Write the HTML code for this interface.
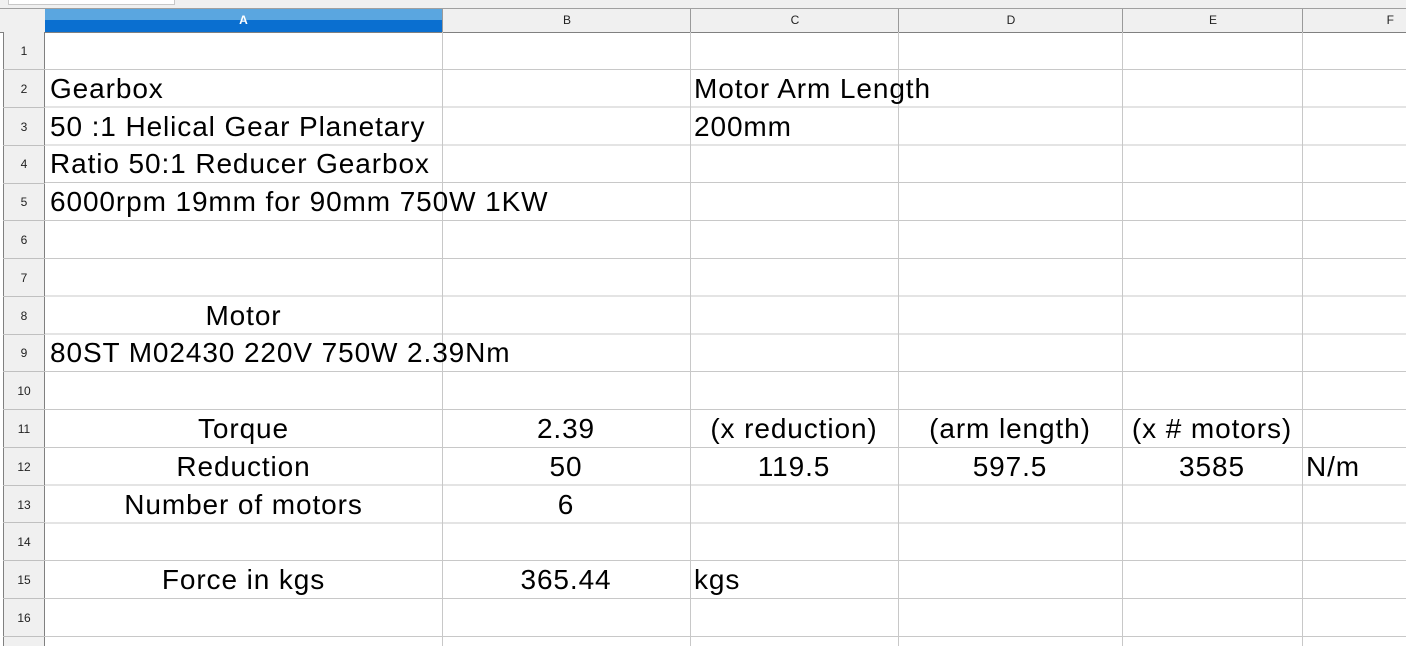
<!DOCTYPE html>
<html><head><style>
body{margin:0;width:1406px;height:646px;overflow:hidden;background:#fff;font-family:"Liberation Sans",Arial,sans-serif;position:relative}
.top{position:absolute;left:0;top:0;width:1406px;height:8px;background:#f0f0f0;border-bottom:1px solid #a0a0a0}
.top .t{position:absolute;left:8px;top:0;width:165px;height:4px;background:#fff;border:1px solid #c8c8c8;border-top:none}
.hdr{position:absolute;top:9px;height:23px;background:#f0f0f0;border-bottom:1px solid #808080;left:0;width:1406px}
.ch{position:absolute;top:9px;height:23px;line-height:22px;text-align:center;font-size:12px;color:#222;border-left:1px solid #9a9a9a}
.grid{position:absolute;left:45px;top:32px;width:1361px;height:614px;
background:repeating-linear-gradient(to bottom,transparent 0,transparent 36.8px,#c8c8c8 36.8px,#c8c8c8 37.8px)}
.v{position:absolute;top:32px;height:614px;width:1px;background:#c8c8c8}
.rh{position:absolute;left:3px;width:42px;height:614px;top:32px;background:#f0f0f0;border-left:1px solid #808080;border-right:1px solid #808080;box-sizing:border-box}
.rn{position:absolute;left:3px;width:42px;text-align:center;font-size:12px;color:#222;height:37.8px;line-height:38px}
.rl{position:absolute;left:3px;width:42px;height:1px;background:#c0c0c0}
.c{position:absolute;font-size:28px;letter-spacing:0.9px;color:#000;height:37.8px;line-height:38px;white-space:nowrap}
.ctr{text-align:center}
</style></head><body>
<div class="top"><div class="t"></div></div>
<div class="hdr"></div>
<div class="ch" style="left:0;width:45px;border-left:none;border-right:1px solid #9a9a9a"></div>
<div class="ch" style="left:45px;width:397px;background:linear-gradient(#5aa6e0 0 11px,#0a6fd0 11px);color:#fff;font-weight:bold;border-left:none">A</div>
<div class="ch" style="left:442px;width:248px">B</div>
<div class="ch" style="left:690px;width:208px">C</div>
<div class="ch" style="left:898px;width:224px">D</div>
<div class="ch" style="left:1122px;width:180px">E</div>
<div class="ch" style="left:1302px;width:104px;text-align:right;padding-right:12px;box-sizing:border-box">F</div>
<div class="grid"></div>
<div class="v" style="left:442px"></div><div class="v" style="left:690px"></div><div class="v" style="left:898px"></div><div class="v" style="left:1122px"></div><div class="v" style="left:1302px"></div>
<div class="rh"></div>
<div class="rn" style="top:32px">1</div><div class="rn" style="top:69.8px">2</div><div class="rn" style="top:107.6px">3</div><div class="rn" style="top:145.4px">4</div><div class="rn" style="top:183.2px">5</div><div class="rn" style="top:221px">6</div><div class="rn" style="top:258.8px">7</div><div class="rn" style="top:296.6px">8</div><div class="rn" style="top:334.4px">9</div><div class="rn" style="top:372.2px">10</div><div class="rn" style="top:410px">11</div><div class="rn" style="top:447.8px">12</div><div class="rn" style="top:485.6px">13</div><div class="rn" style="top:523.4px">14</div><div class="rn" style="top:561.2px">15</div><div class="rn" style="top:599px">16</div>
<div class="rl" style="top:69px"></div><div class="rl" style="top:107px"></div><div class="rl" style="top:145px"></div><div class="rl" style="top:183px"></div><div class="rl" style="top:220px"></div><div class="rl" style="top:258px"></div><div class="rl" style="top:296px"></div><div class="rl" style="top:334px"></div><div class="rl" style="top:371px"></div><div class="rl" style="top:409px"></div><div class="rl" style="top:447px"></div><div class="rl" style="top:485px"></div><div class="rl" style="top:522px"></div><div class="rl" style="top:560px"></div><div class="rl" style="top:598px"></div><div class="rl" style="top:636px"></div>

<div class="c" style="left:50px;top:69.8px">Gearbox</div>
<div class="c" style="left:694px;top:69.8px">Motor Arm Length</div>
<div class="c" style="left:50px;top:107.6px">50 :1 Helical Gear Planetary</div>
<div class="c" style="left:694px;top:107.6px">200mm</div>
<div class="c" style="left:50px;top:145.4px">Ratio 50:1 Reducer Gearbox</div>
<div class="c" style="left:50px;top:183.2px">6000rpm 19mm for 90mm 750W 1KW</div>
<div class="c ctr" style="left:45px;width:397px;top:296.6px">Motor</div>
<div class="c" style="left:50px;top:334.4px">80ST M02430 220V 750W 2.39Nm</div>
<div class="c ctr" style="left:45px;width:397px;top:410px">Torque</div>
<div class="c ctr" style="left:442px;width:248px;top:410px">2.39</div>
<div class="c ctr" style="left:690px;width:208px;top:410px">(x reduction)</div>
<div class="c ctr" style="left:898px;width:224px;top:410px">(arm length)</div>
<div class="c ctr" style="left:1122px;width:180px;top:410px">(x # motors)</div>
<div class="c ctr" style="left:45px;width:397px;top:447.8px">Reduction</div>
<div class="c ctr" style="left:442px;width:248px;top:447.8px">50</div>
<div class="c ctr" style="left:690px;width:208px;top:447.8px">119.5</div>
<div class="c ctr" style="left:898px;width:224px;top:447.8px">597.5</div>
<div class="c ctr" style="left:1122px;width:180px;top:447.8px">3585</div>
<div class="c" style="left:1306px;top:447.8px">N/m</div>
<div class="c ctr" style="left:45px;width:397px;top:485.6px">Number of motors</div>
<div class="c ctr" style="left:442px;width:248px;top:485.6px">6</div>
<div class="c ctr" style="left:45px;width:397px;top:561.2px">Force in kgs</div>
<div class="c ctr" style="left:442px;width:248px;top:561.2px">365.44</div>
<div class="c" style="left:694px;top:561.2px">kgs</div>
</body></html>
